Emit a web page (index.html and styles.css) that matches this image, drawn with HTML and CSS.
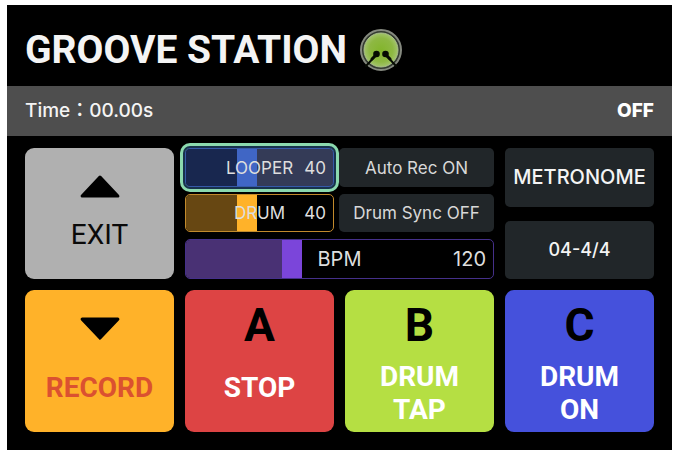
FILE: index.html
```
<!DOCTYPE html>
<html lang="en">
<head>
  <meta charset="UTF-8">
  <meta name="viewport" content="width=device-width, initial-scale=1.0">
  <title>Groove Station</title>
  <link rel="stylesheet" href="styles.css">
</head>
<body>
  <div class="station">
    <header class="header">
      <h1>GROOVE STATION</h1>
      <svg class="logo" viewBox="0 0 42 42" aria-hidden="true">
        <defs>
          <radialGradient id="skin">
            <stop offset="0" stop-color="#83b52c"/>
            <stop offset="0.7" stop-color="#8eb843"/>
            <stop offset="1" stop-color="#a3c46c"/>
          </radialGradient>
        </defs>
        <circle cx="21" cy="21" r="20" fill="#343b30" stroke="#85897f" stroke-width="2"/>
        <circle cx="21" cy="21" r="17" fill="url(#skin)" stroke="#a9bd8c" stroke-width="1"/>
        <path d="M17 25L6 37M25 25L36 37" stroke="#060b02" stroke-width="2" stroke-linecap="round"/>
        <path d="M17 25L12 30M25 25L30 30" stroke="#060b02" stroke-width="3" stroke-linecap="round"/>
        <circle cx="16.500" cy="25" r="3.300" fill="#060b02"/>
        <circle cx="25.500" cy="25" r="3.300" fill="#060b02"/>
      </svg>
    </header>

    <div class="status">
      <span>Time：00.00s</span>
      <strong>OFF</strong>
    </div>

    <main class="pads">
      <button class="pad exit">
        <svg class="arrow" viewBox="0 0 40 24" aria-hidden="true"><path d="M20 3L37 21H3Z"/></svg>
        <span class="pad-label">EXIT</span>
      </button>

      <div class="controls">
        <div class="slider looper selected">
          <input type="range" id="looper" min="0" max="100" value="40">
          <label for="looper">LOOPER</label>
          <output for="looper">40</output>
        </div>
        <button class="option">Auto Rec ON</button>
        <div class="slider drum">
          <input type="range" id="drum" min="0" max="100" value="40">
          <label for="drum">DRUM</label>
          <output for="drum">40</output>
        </div>
        <button class="option">Drum Sync OFF</button>
        <div class="slider bpm">
          <input type="range" id="bpm" min="40" max="280" value="120">
          <label for="bpm">BPM</label>
          <output for="bpm">120</output>
        </div>
      </div>

      <div class="metronome">
        <button class="option strong">METRONOME</button>
        <button class="option beat">04-4/4</button>
      </div>

      <button class="pad record">
        <svg class="arrow" viewBox="0 0 40 24" aria-hidden="true"><path d="M3 3H37L20 21Z"/></svg>
        <span class="pad-label">RECORD</span>
      </button>
      <button class="pad stop">
        <span class="letter">A</span>
        <span class="pad-label">STOP</span>
      </button>
      <button class="pad tap">
        <span class="letter">B</span>
        <span class="pad-label">DRUM<br>TAP</span>
      </button>
      <button class="pad drum-on">
        <span class="letter">C</span>
        <span class="pad-label">DRUM<br>ON</span>
      </button>
    </main>
  </div>

  <script>
    document.querySelectorAll(".slider input").forEach(input => {
      input.addEventListener("input", () => {
        input.parentElement.querySelector("output").textContent = input.value;
      });
    });
  </script>
</body>
</html>
```
FILE: styles.css
```
* { box-sizing: border-box; }
body {
  margin: 5px 4px 0 7px;
  background: #fff;
  font-family: Inter, "Noto Sans CJK TC", sans-serif;
}
.station {
  background: #000;
  color: #f4f4f4;
}
.header {
  display: flex;
  align-items: center;
  gap: 13px;
  padding: 22px 18px 13px;
}
h1 {
  margin: 0;
  font: bold 39px/46px Roboto, sans-serif;
}
.logo {
  width: 42px;
  height: 42px;
}
.status {
  display: flex;
  justify-content: space-between;
  align-items: center;
  min-height: 50px;
  padding: 0 18px;
  background: #4e4e4e;
  font-size: 19px;
  line-height: 24px;
  font-weight: 500;
}
.status strong {
  font-weight: 800;
  color: #fff;
}
.pads {
  display: grid;
  grid-template-columns: repeat(4, minmax(0, 1fr));
  gap: 11px;
  padding: 12px 18px 18px;
}
button {
  margin: 0;
  padding: 0;
  border: none;
  font-family: inherit;
  cursor: pointer;
}

/* big pads */
.pad {
  display: flex;
  flex-direction: column;
  align-items: center;
  justify-content: flex-start;
  min-height: 142px;
  border-radius: 9px;
  color: #fff;
  font: bold 28px/33px Roboto, sans-serif;
}
.letter {
  margin: 12px 0;
  font-size: 46px;
  line-height: 46px;
  color: #000;
}
.pad-label {
  display: grid;
  align-content: center;
  min-height: 55px;
}
.arrow {
  width: 42px;
  margin: 26px 0 19px;
  fill: #000;
  stroke: #000;
  stroke-width: 3;
  stroke-linejoin: round;
}
.exit {
  min-height: 131px;
  background: #b0b0b0;
  color: #0a0a0a;
  font-weight: normal;
}
.exit .arrow { margin-bottom: 8px; }
.record {
  background: #ffb229;
  color: #db5130;
}
.stop { background: #dd4444; }
.tap { background: #b5df43; }
.drum-on { background: #4551dc; }

/* middle controls */
.controls {
  grid-column: span 2;
  display: grid;
  grid-template-columns: 149fr 155fr;
  grid-template-rows: 39fr 38fr 40fr;
  gap: 7px 5px;
}
.option {
  border-radius: 5px;
  background: #212629;
  color: #d8d8d8;
  font-size: 17px;
}
.metronome {
  display: grid;
  grid-auto-rows: 1fr;
  gap: 14px;
}
.strong,
.beat {
  color: #f4f4f4;
  font-size: 20px;
  font-weight: 500;
}
.beat { font-size: 18px; }

/* sliders, the name and value lie over the track */
.slider {
  position: relative;
  display: grid;
  border-radius: 5px;
  font-size: 17px;
}
.slider input {
  appearance: none;
  width: 100%;
  height: 100%;
  margin: 0;
  overflow: hidden;
  border: 1px solid var(--edge);
  border-radius: 5px;
  background: var(--rest);
}
.slider input::-webkit-slider-runnable-track { height: 100%; }
.slider input::-webkit-slider-thumb {
  appearance: none;
  width: 20px;
  height: 100%;
  border-radius: 0;
  background: var(--thumb);
  box-shadow: -400px 0 0 400px var(--fill);
}
.slider label,
.slider output {
  position: absolute;
  inset: 0;
  display: grid;
  align-items: center;
  justify-content: center;
  color: #dedede;
  pointer-events: none;
}
.slider output {
  justify-content: end;
  padding-right: 8px;
}
.looper {
  --edge: #3659a8;
  --rest: #343b57;
  --thumb: #4066c5;
  --fill: #18274f;
}
.drum {
  --edge: #c28a2c;
  --rest: #000;
  --thumb: #ffb229;
  --fill: #674712;
}
.bpm {
  grid-column: span 2;
  font-size: 20px;
  --edge: #45308a;
  --rest: #000;
  --thumb: #7b45da;
  --fill: #493174;
}
.selected {
  box-shadow: 0 0 0 2px #17324c, 0 0 0 5px #8bd9ae;
}
```
